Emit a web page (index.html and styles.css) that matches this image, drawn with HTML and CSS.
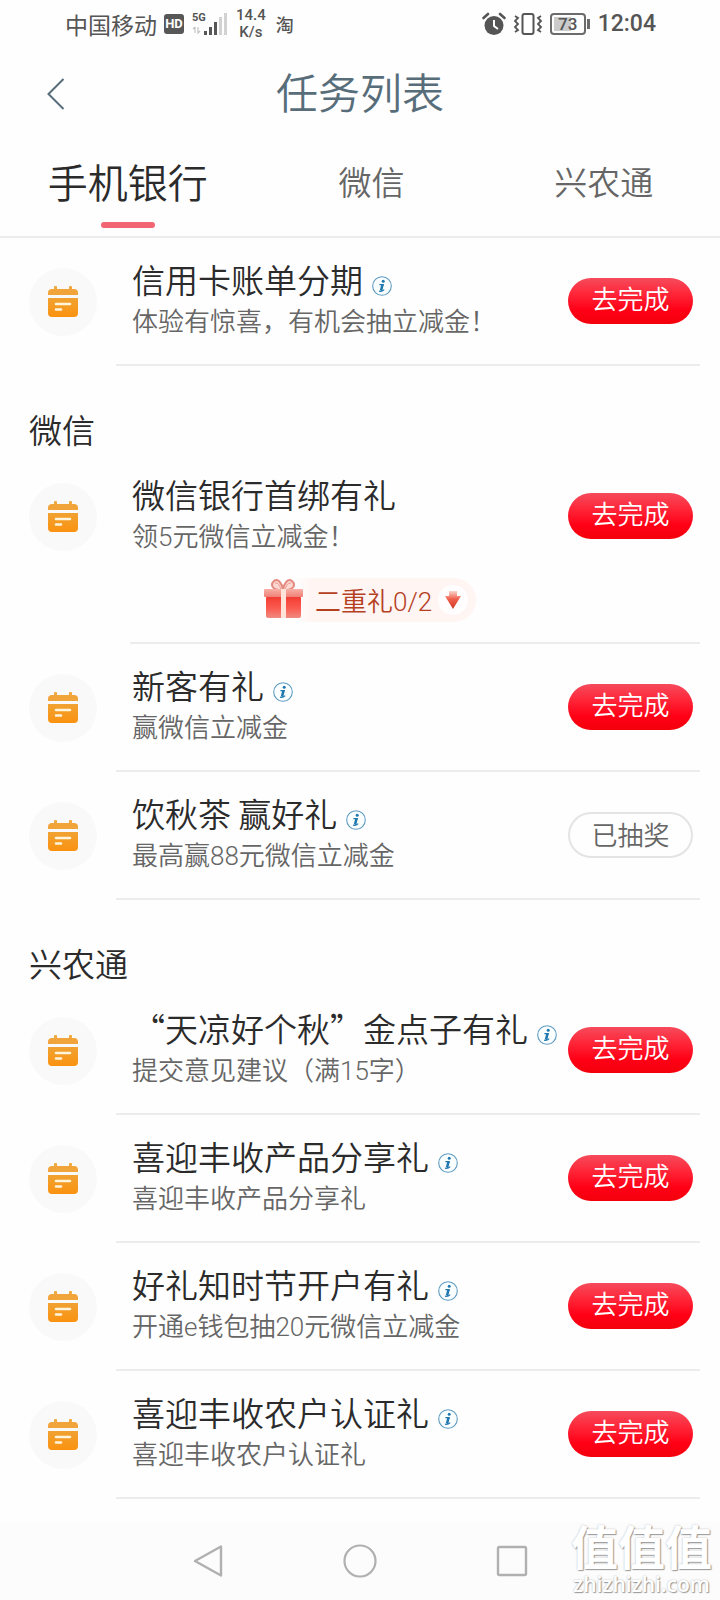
FILE: index.html
```html
<!DOCTYPE html>
<html lang="zh-CN">
<head>
<meta charset="utf-8">
<meta name="viewport" content="width=device-width, initial-scale=1">
<title>任务列表</title>
<link rel="stylesheet" href="styles.css">
</head>
<body>
<svg class="defs" width="0" height="0" aria-hidden="true">
  <defs>
    <linearGradient id="orange" x1="0" y1="0" x2="0" y2="1">
      <stop offset="0" stop-color="#f0a232"/><stop offset="1" stop-color="#fb9210"/>
    </linearGradient>
    <linearGradient id="box" x1="0" y1="0" x2="0" y2="1">
      <stop offset="0" stop-color="#f23a30"/><stop offset="0.55" stop-color="#fb5a50"/><stop offset="1" stop-color="#f08a80"/>
    </linearGradient>
    <linearGradient id="lid" x1="0" y1="0" x2="0" y2="1">
      <stop offset="0" stop-color="#f9b0a6"/><stop offset="1" stop-color="#ee8076"/>
    </linearGradient>
    <linearGradient id="drop" x1="0" y1="0" x2="0" y2="1">
      <stop offset="0" stop-color="#fbd5cc"/><stop offset="0.45" stop-color="#f0604c"/><stop offset="1" stop-color="#cf3526"/>
    </linearGradient>
    <symbol id="calendar" viewBox="0 0 32 32">
      <rect x="7" y="0" width="3" height="6" rx="1" fill="#f0a840"/>
      <rect x="22" y="0" width="3" height="6" rx="1" fill="#f0a840"/>
      <path d="M5 3h22a4 4 0 0 1 4 4v2H1V7a4 4 0 0 1 4-4z" fill="#f0a43a"/>
      <path d="M1 12h30v15a4 4 0 0 1-4 4H5a4 4 0 0 1-4-4z" fill="url(#orange)"/>
      <path d="M9 18h14M9 23.500h5" stroke="#fff4dc" stroke-width="2.6" stroke-linecap="round"/>
    </symbol>
    <symbol id="info" viewBox="0 0 20 20">
      <circle cx="10" cy="10" r="9.3" fill="#fbfeff" stroke="#5f9cc0" stroke-width="1.1"/>
      <circle cx="11.2" cy="5.2" r="1.5" fill="#1f78ae"/>
      <path d="M7.4 8.6h3.8L9.5 14.6M7 15.2c1.6.3 3.6 0 5.2-1.6" fill="none" stroke="#1f78ae" stroke-width="1.3"/>
      <path d="M10.4 8.6 8.9 14.6" stroke="#1f78ae" stroke-width="2.2"/>
    </symbol>
  </defs>
</svg>

<div class="status">
  <span class="carrier">中国移动</span>
  <span class="hd">HD</span>
  <span class="signal">
    <svg width="36" height="24" viewBox="0 0 36 24" aria-hidden="true">
      <path d="M3 15v6M1 17l2-2M6 15v6l2-2" stroke="#c4c4c4" stroke-width="1.2" fill="none"/>
      <path d="M13.500 19v4M18.500 15v8M23.500 10v13" stroke="#575757" stroke-width="3"/>
      <path d="M28.500 5v18M33.500 1v22" stroke="#d2d2d2" stroke-width="3"/>
    </svg>
    <span class="net">5G</span>
  </span>
  <span class="speed">14.4<br>K/s</span>
  <span class="tao">淘</span>
  <span class="status-right">
    <svg width="24" height="24" viewBox="0 0 24 24" aria-hidden="true">
      <circle cx="12" cy="13.500" r="9.500" fill="#555"/>
      <path d="M1.500 6 6 2M22.500 6 18 2" stroke="#555" stroke-width="2.600" stroke-linecap="round"/>
      <path d="M12 8v6l4 3" stroke="#fff" stroke-width="2" fill="none"/>
    </svg>
    <svg width="30" height="24" viewBox="0 0 30 24" aria-hidden="true">
      <rect x="9.500" y="2" width="11" height="20" rx="2" fill="none" stroke="#555" stroke-width="2"/>
      <path d="M2 4l3 2-3 3 3 3-3 3 3 3-3 2M28 4l-3 2 3 3-3 3 3 3-3 3 3 2" fill="none" stroke="#555" stroke-width="1.800"/>
    </svg>
    <span class="battery"><span class="cell">73</span></span>
    <span class="clock">12:04</span>
  </span>
</div>

<header class="header">
  <button class="back" type="button" aria-label="返回">
    <svg width="18" height="32" viewBox="0 0 18 32" aria-hidden="true"><path d="M16.500 1 1.500 16l15 15" fill="none" stroke="#586d7a" stroke-width="2"/></svg>
  </button>
  <h1 class="title">任务列表</h1>
</header>

<nav class="tabs">
  <button class="tab active" type="button">手机银行</button>
  <button class="tab" type="button">微信</button>
  <button class="tab" type="button">兴农通</button>
</nav>

<main class="content">
  <ul class="list">
    <li class="task">
      <span class="badge"><svg width="32" height="32" aria-hidden="true"><use href="#calendar"/></svg></span>
      <div class="body">
        <div class="text">
          <h3 class="name">信用卡账单分期<button class="info" type="button" aria-label="说明"><svg width="20" height="20"><use href="#info"/></svg></button></h3>
          <p class="desc">体验有惊喜，有机会抽立减金！</p>
        </div>
        <button class="go" type="button">去完成</button>
      </div>
    </li>
  </ul>

  <h2 class="section">微信</h2>
  <ul class="list">
    <li class="task with-gift">
      <span class="badge"><svg width="32" height="32" aria-hidden="true"><use href="#calendar"/></svg></span>
      <div class="body">
        <div class="text">
          <h3 class="name">微信银行首绑有礼</h3>
          <p class="desc">领5元微信立减金！</p>
        </div>
        <button class="go" type="button">去完成</button>
        <button class="gift" type="button">
          <svg class="gift-box" width="40" height="44" viewBox="0 0 40 44" aria-hidden="true">
            <path d="M19 12C9 12 7 7 11 3c4-3 8 2 9 9 1-7 5-12 9-9 4 4 2 9-8 9" fill="#fbd9d2" stroke="#e58a80" stroke-width="2"/>
            <path d="M18 11c-2-5-3-6-6-6M22 11c2-5 3-6 6-6" fill="none" stroke="#ee9a90" stroke-width="1"/>
            <rect x="3" y="18" width="35" height="22" rx="2" fill="url(#box)"/>
            <rect x="1" y="11" width="39" height="8" rx="1" fill="url(#lid)"/>
            <rect x="18" y="11" width="5" height="29" fill="#fde3d8"/>
          </svg>
          <span class="gift-label">二重礼0/2</span>
          <span class="gift-arrow"><svg width="16" height="20" viewBox="0 0 16 20" aria-hidden="true"><path d="M4 1h8v5h4l-8 13L0 6h4z" fill="url(#drop)"/></svg></span>
        </button>
      </div>
    </li>
    <li class="task">
      <span class="badge"><svg width="32" height="32" aria-hidden="true"><use href="#calendar"/></svg></span>
      <div class="body">
        <div class="text">
          <h3 class="name">新客有礼<button class="info" type="button" aria-label="说明"><svg width="20" height="20"><use href="#info"/></svg></button></h3>
          <p class="desc">赢微信立减金</p>
        </div>
        <button class="go" type="button">去完成</button>
      </div>
    </li>
    <li class="task">
      <span class="badge"><svg width="32" height="32" aria-hidden="true"><use href="#calendar"/></svg></span>
      <div class="body">
        <div class="text">
          <h3 class="name">饮秋茶 赢好礼<button class="info" type="button" aria-label="说明"><svg width="20" height="20"><use href="#info"/></svg></button></h3>
          <p class="desc">最高赢88元微信立减金</p>
        </div>
        <button class="go done" type="button">已抽奖</button>
      </div>
    </li>
  </ul>

  <h2 class="section">兴农通</h2>
  <ul class="list">
    <li class="task">
      <span class="badge"><svg width="32" height="32" aria-hidden="true"><use href="#calendar"/></svg></span>
      <div class="body">
        <div class="text">
          <h3 class="name">“天凉好个秋”金点子有礼<button class="info" type="button" aria-label="说明"><svg width="20" height="20"><use href="#info"/></svg></button></h3>
          <p class="desc">提交意见建议（满15字）</p>
        </div>
        <button class="go" type="button">去完成</button>
      </div>
    </li>
    <li class="task">
      <span class="badge"><svg width="32" height="32" aria-hidden="true"><use href="#calendar"/></svg></span>
      <div class="body">
        <div class="text">
          <h3 class="name">喜迎丰收产品分享礼<button class="info" type="button" aria-label="说明"><svg width="20" height="20"><use href="#info"/></svg></button></h3>
          <p class="desc">喜迎丰收产品分享礼</p>
        </div>
        <button class="go" type="button">去完成</button>
      </div>
    </li>
    <li class="task">
      <span class="badge"><svg width="32" height="32" aria-hidden="true"><use href="#calendar"/></svg></span>
      <div class="body">
        <div class="text">
          <h3 class="name">好礼知时节开户有礼<button class="info" type="button" aria-label="说明"><svg width="20" height="20"><use href="#info"/></svg></button></h3>
          <p class="desc">开通e钱包抽20元微信立减金</p>
        </div>
        <button class="go" type="button">去完成</button>
      </div>
    </li>
    <li class="task">
      <span class="badge"><svg width="32" height="32" aria-hidden="true"><use href="#calendar"/></svg></span>
      <div class="body">
        <div class="text">
          <h3 class="name">喜迎丰收农户认证礼<button class="info" type="button" aria-label="说明"><svg width="20" height="20"><use href="#info"/></svg></button></h3>
          <p class="desc">喜迎丰收农户认证礼</p>
        </div>
        <button class="go" type="button">去完成</button>
      </div>
    </li>
  </ul>
</main>

<footer class="system">
  <button class="key" type="button" aria-label="后退"><svg width="34" height="34" viewBox="0 0 34 34"><path d="M30 2.500v29L4 17z" fill="none" stroke="#b0b0b0" stroke-width="2.400" stroke-linejoin="round"/></svg></button>
  <button class="key" type="button" aria-label="主页"><svg width="34" height="34" viewBox="0 0 34 34"><circle cx="17" cy="17" r="15.500" fill="none" stroke="#b0b0b0" stroke-width="2.200"/></svg></button>
  <button class="key" type="button" aria-label="最近任务"><svg width="34" height="34" viewBox="0 0 34 34"><rect x="3" y="3" width="28" height="28" rx="1.500" fill="none" stroke="#b0b0b0" stroke-width="2.400"/></svg></button>
  <div class="watermark"><span class="mark">值值值</span><span class="site">zhizhizhi.com</span></div>
</footer>
</body>
</html>
```

FILE: styles.css
```css
* { box-sizing: border-box; }

body {
  margin: 0;
  min-height: 100vh;
  display: flex;
  flex-direction: column;
  background: #fefefe;
  color: #2b2b2b;
  font-family: "Noto Sans CJK SC", sans-serif;
  font-weight: 350;
}

button {
  margin: 0;
  padding: 0;
  border: 0;
  background: none;
  color: inherit;
  font: inherit;
  cursor: pointer;
}

svg { display: block; }
.defs { position: absolute; }
h1, h2, h3, p, ul { margin: 0; padding: 0; font-weight: inherit; }
ul { list-style: none; }

/* status bar */
.status {
  display: flex;
  align-items: center;
  height: 48px;
  padding: 0 64px 0 65px;
  color: #555;
  font-weight: 400;
}
.carrier { font-size: 23px; line-height: 32px; }
.hd {
  margin-left: 7px;
  width: 20px;
  border-radius: 3px;
  background: #575757;
  color: #fff;
  font: 700 13px/20px Roboto, sans-serif;
  text-align: center;
}
.signal { position: relative; margin-left: 8px; }
.net {
  position: absolute;
  left: 0;
  top: 0;
  font: 700 11px/12px Roboto, sans-serif;
}
.speed {
  margin-left: 8px;
  font: 500 15px/17px Roboto, sans-serif;
  text-align: center;
}
.tao { margin-left: 10px; font-size: 18px; font-weight: 500; line-height: 24px; }
.status-right { display: flex; align-items: center; margin-left: auto; gap: 7px; }
.battery {
  position: relative;
  width: 36px;
  height: 22px;
  padding: 2px;
  border: 2px solid #6b6b6b;
  border-radius: 4px;
  margin-right: 5px;
}
.battery::after {
  content: "";
  position: absolute;
  right: -6px;
  top: 4px;
  width: 3px;
  height: 10px;
  background: #6b6b6b;
}
.cell {
  display: block;
  background: linear-gradient(90deg, #cbcbcb 60%, transparent 60%);
  font: 500 17px/14px Roboto, sans-serif;
  text-align: center;
}
.clock { font: 500 23px/28px Roboto, sans-serif; }

/* page header */
.header {
  display: grid;
  grid-template-columns: 1fr auto 1fr;
  align-items: center;
  height: 92px;
  padding: 0 47px;
  color: #586d7a;
}
.back { justify-self: start; }
.title { padding-bottom: 6px; font-size: 42px; line-height: 60px; }

/* tabs */
.tabs {
  display: grid;
  grid-template-columns: 11fr 10fr 10fr;
  height: 98px;
  border-bottom: 2px solid #ececec;
}
.tab {
  position: relative;
  padding-bottom: 14px;
  color: #666;
  font-size: 33px;
  line-height: 48px;
}
.tab.active { color: #2b2b2b; font-size: 40px; }
.tab.active::after {
  content: "";
  position: absolute;
  left: 50%;
  bottom: 8px;
  width: 54px;
  height: 6px;
  margin-left: -27px;
  border-radius: 3px;
  background: #f26572;
}

/* task lists */
.section {
  padding: 43px 29px 4px;
  font-size: 33px;
  line-height: 40px;
}
.task { display: flex; padding: 0 20px 0 29px; }
.badge {
  flex: none;
  display: grid;
  place-items: center;
  width: 68px;
  height: 68px;
  margin-top: 30px;
  border-radius: 50%;
  background: #f9f9fa;
}
.body {
  flex: 1;
  display: flex;
  flex-wrap: wrap;
  justify-content: space-between;
  margin-left: 19px;
  padding: 21px 7px 22px 16px;
  border-bottom: 2px solid #ececec;
}
.name {
  display: flex;
  align-items: center;
  gap: 9px;
  font-size: 33px;
  line-height: 40px;
  white-space: nowrap;
}
.info { padding-top: 14px; }
.desc {
  margin-top: 3px;
  color: #666;
  font-family: Roboto, "Noto Sans CJK SC", sans-serif;
  font-size: 26px;
  line-height: 40px;
  white-space: nowrap;
}
.go {
  width: 125px;
  height: 46px;
  margin-top: 19px;
  padding-bottom: 6px;
  border-radius: 23px;
  background: linear-gradient(#f54b5c, #ff2638 35%, #ff0016 70%, #f4000c);
  color: #fff;
  font-size: 26px;
  line-height: 40px;
}
.go.done {
  border: 2px solid #e4e4e4;
  background: #fefefe;
  color: #666;
}

/* expandable gift progress */
.with-gift .body { margin-left: 33px; padding-left: 2px; padding-bottom: 20px; }
.gift {
  display: flex;
  align-items: center;
  height: 44px;
  margin: 21px auto 0 131px;
  padding-right: 8px;
  border-radius: 22px;
  background: linear-gradient(90deg, transparent 30px, #fff5f3 50px);
}
.gift-label {
  margin-left: 12px;
  padding-top: 4px;
  color: #b5401f;
  font-family: Roboto, "Noto Sans CJK SC", sans-serif;
  font-size: 26px;
  line-height: 40px;
}
.gift-arrow {
  display: grid;
  place-items: center;
  width: 30px;
  height: 30px;
  margin-left: 6px;
  border-radius: 50%;
  background: #fffdfd;
}

/* system navigation */
.system {
  position: relative;
  display: flex;
  justify-content: center;
  align-items: center;
  gap: 118px;
  height: 78px;
  margin-top: auto;
  background: #fcfcfc;
}
.watermark {
  position: absolute;
  right: 8px;
  bottom: 4px;
  display: flex;
  flex-direction: column;
  align-items: center;
  color: #fff;
  font-weight: 700;
  text-shadow: 1px 1px 1px #999, 0 0 2px #bbb;
}
.mark { font-size: 47px; line-height: 54px; }
.site { font: 600 21px/24px "Open Sans", sans-serif; }
```
